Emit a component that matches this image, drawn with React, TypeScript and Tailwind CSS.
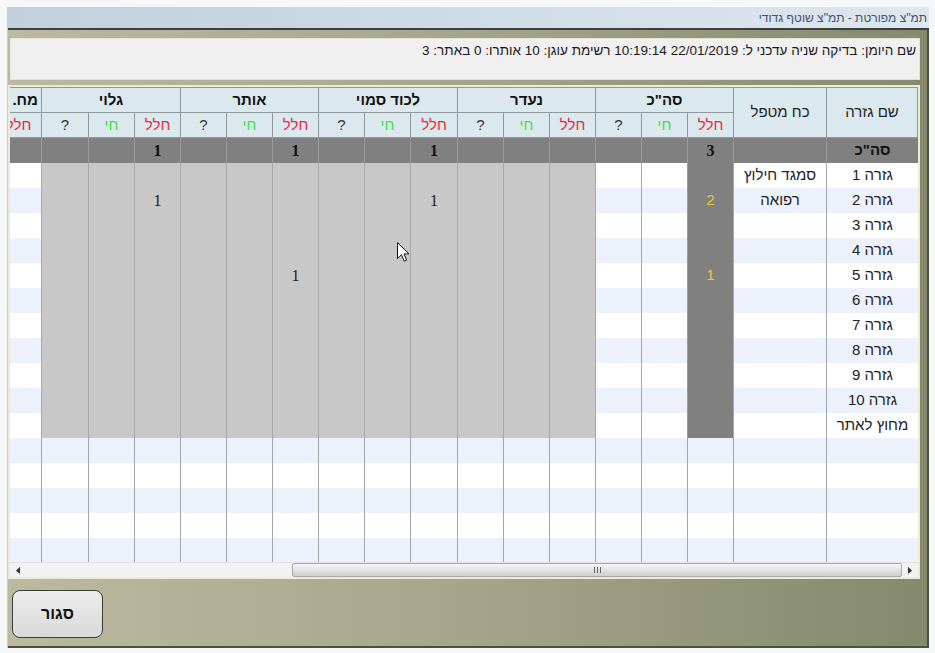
const GROUPS = ['סה"כ', 'נעדר', 'לכוד סמוי', 'אותר', 'גלוי', 'מח.']
const SUBS = ['חלל', 'חי', '?']

interface Row {
  name: string
  force?: string
  total?: string
  cells?: Record<string, string>
}

const rows: Row[] = [
  { name: 'גזרה 1', force: 'סמגד חילוץ' },
  { name: 'גזרה 2', force: 'רפואה', total: '2', cells: { '2-0': '1', '4-0': '1' } },
  { name: 'גזרה 3' },
  { name: 'גזרה 4' },
  { name: 'גזרה 5', total: '1', cells: { '3-0': '1' } },
  { name: 'גזרה 6' },
  { name: 'גזרה 7' },
  { name: 'גזרה 8' },
  { name: 'גזרה 9' },
  { name: 'גזרה 10' },
  { name: 'מחוץ לאתר' },
]

const totals: Record<string, string> = { '0-0': '3', '2-0': '1', '3-0': '1', '4-0': '1' }

const subColor = (s: number) =>
  s === 0 ? 'text-[#e8283c]' : s === 1 ? 'text-[#3fe03f]' : 'text-[#333]'

function Cursor() {
  return (
    <svg
      className="absolute left-[397px] top-[242px]"
      width="13"
      height="21"
      viewBox="0 0 13 21"
    >
      <path
        d="M0.5 0.5 L0.5 16.5 L4.5 12.8 L7.2 19.2 L9.6 18.2 L7 11.9 L12 11.9 Z"
        fill="#fff"
        stroke="#111"
        strokeWidth="1"
      />
    </svg>
  )
}

function Grid() {
  const emptyRows = 5
  return (
    <div className="h-[475px] overflow-hidden" dir="rtl">
      <div className="grid w-max grid-cols-[92px_93px_46px_46px_46px_46px_46px_46px_47px_46px_46px_46px_46px_46px_46px_46px_47px_46px_46px_46px] grid-rows-[26px_25px] auto-rows-[25px]">
        {/* header */}
        <div className="row-span-2 flex items-center justify-center border-t border-r border-l border-b border-[#8e989d] bg-[#dbe9ef] text-[15px] text-[#222]">
          שם גזרה
        </div>
        <div className="row-span-2 flex items-center justify-center border-t border-l border-b border-[#8e989d] bg-[#dbe9ef] text-[15px] text-[#222]">
          כח מטפל
        </div>
        {GROUPS.map((g, gi) => (
          <div
            key={g}
            className={`col-span-3 flex items-center border-t border-l border-b border-[#8e989d] bg-[#dbe9ef] text-[15px] font-bold text-[#111] whitespace-nowrap ${
              gi === 5 ? 'justify-start pr-[3px]' : 'justify-center'
            }`}
          >
            {g}
          </div>
        ))}
        {GROUPS.map((g) =>
          SUBS.map((s, si) => (
            <div
              key={g + s}
              className={`flex items-center justify-center border-l border-b border-[#8e989d] bg-[#dbe9ef] text-[15px] ${subColor(si)}`}
            >
              {s}
            </div>
          )),
        )}

        {/* totals */}
        <div className="flex items-center justify-center border-l border-[#9a9a9a] bg-[#808080] text-[15px] font-bold text-[#111]">
          סה"כ
        </div>
        <div className="border-l border-[#9a9a9a] bg-[#808080]" />
        {GROUPS.map((_, gi) =>
          SUBS.map((_, si) => (
            <div
              key={`t${gi}-${si}`}
              className="flex items-center justify-center border-l border-[#9a9a9a] bg-[#808080] font-['Liberation_Serif',serif] text-[16px] font-bold text-[#111]"
            >
              {totals[`${gi}-${si}`] ?? ''}
            </div>
          )),
        )}

        {/* data */}
        {rows.map((r, ri) => {
          const zebra = ri % 2 === 0 ? 'bg-white' : 'bg-[#ecf1fb]'
          return [
            <div
              key={`n${ri}`}
              className={`flex items-center justify-center border-l border-[#a3a7ab] text-[15px] text-[#222] whitespace-nowrap ${zebra}`}
            >
              {r.name}
            </div>,
            <div
              key={`f${ri}`}
              className={`flex items-center justify-center border-l border-[#a3a7ab] text-[15px] text-[#222] whitespace-nowrap ${zebra}`}
            >
              {r.force ?? ''}
            </div>,
            ...GROUPS.flatMap((_, gi) =>
              SUBS.map((_, si) => {
                if (gi === 0 && si === 0) {
                  return (
                    <div
                      key={`c${ri}-${gi}-${si}`}
                      className="flex items-center justify-center border-l border-[#9a9a9a] bg-[#808080] text-[15px] text-[#f2c232]"
                    >
                      {r.total ?? ''}
                    </div>
                  )
                }
                const gray = gi >= 1 && gi <= 4
                return (
                  <div
                    key={`c${ri}-${gi}-${si}`}
                    className={`flex items-center justify-center border-l font-['Liberation_Serif',serif] text-[16px] text-[#1a1a2a] ${
                      gray ? 'bg-[#c8c8c8] border-[#a9a9a9]' : `${zebra} border-[#a3a7ab]`
                    }`}
                  >
                    {r.cells?.[`${gi}-${si}`] ?? ''}
                  </div>
                )
              }),
            ),
          ]
        })}

        {/* empty rows */}
        {Array.from({ length: emptyRows }).map((_, ei) => {
          const zebra = (rows.length + ei) % 2 === 0 ? 'bg-white' : 'bg-[#ecf1fb]'
          return Array.from({ length: 20 }).map((_, ci) => (
            <div key={`e${ei}-${ci}`} className={`border-l border-[#a3a7ab] ${zebra}`} />
          ))
        })}
      </div>
    </div>
  )
}

function Scrollbar() {
  return (
    <div className="flex h-[15px] items-center border-t border-[#e2e2e2] bg-[#f2f2f2]">
      <div className="flex w-[16px] items-center justify-center">
        <svg width="4" height="7" viewBox="0 0 4 7">
          <path d="M4 0 L0 3.5 L4 7 Z" fill="#333" />
        </svg>
      </div>
      <div className="w-[266px]" />
      <div className="flex h-[14px] w-[610px] items-center justify-center gap-[2px] rounded-[2px] border border-[#a9a9a9] bg-gradient-to-b from-[#f7f7f7] to-[#cfcfcf]">
        <div className="h-[6px] w-px bg-[#666]" />
        <div className="h-[6px] w-px bg-[#666]" />
        <div className="h-[6px] w-px bg-[#666]" />
      </div>
      <div className="flex w-[16px] items-center justify-center">
        <svg width="4" height="7" viewBox="0 0 4 7">
          <path d="M0 0 L4 3.5 L0 7 Z" fill="#333" />
        </svg>
      </div>
    </div>
  )
}

export default function App() {
  return (
    <div className="relative h-[653px] w-[935px] overflow-hidden bg-[#f5f7f9] pl-[7px] pt-[7px] font-['Liberation_Sans',sans-serif]">
      <div className="flex h-[641px] w-[922px] flex-col border-l border-[#c9ced3]">
        {/* title bar */}
        <div
          className="flex h-[21px] items-center justify-end bg-gradient-to-r from-[#c2d0dd] to-[#dde7f0] pr-[2px] text-[12px] text-[#4a5068]"
          dir="rtl"
        >
          <span className="ml-auto">תמ"צ מפורטת - תמ"צ שוטף גדודי</span>
        </div>
        <div className="h-[2px] bg-[#3e3e3e]" />

        {/* client */}
        <div className="flex flex-1 flex-col border-r-2 border-b-2 border-[#4c4f45] bg-gradient-to-r from-[#bbbaa0] via-[#a4a689] to-[#858a6c] pt-[8px]">
          <div
            className="ml-[2px] h-[42px] w-[910px] border border-[#e4e4d4] bg-[#f0f0f0] pr-[3px] pt-[2px] text-[13.5px] text-[#1a1a1a]"
            dir="rtl"
          >
            שם היומן: בדיקה שניה עדכני ל: 22/01/2019 10:19:14 רשימת עוגן: 10 אותרו: 0 באתר: 3
          </div>

          <div className="mt-[5px] w-[912px] border-2 border-[#ecebd6]">
            <Grid />
            <Scrollbar />
          </div>

          <button className="ml-[4px] mt-[11px] flex h-[48px] w-[91px] items-center justify-center rounded-[8px] border border-[#3a3a3a] bg-gradient-to-b from-[#ededed] to-[#d9d9d9] text-[16px] font-bold text-[#111]">
            סגור
          </button>
        </div>
      </div>
      <Cursor />
    </div>
  )
}
